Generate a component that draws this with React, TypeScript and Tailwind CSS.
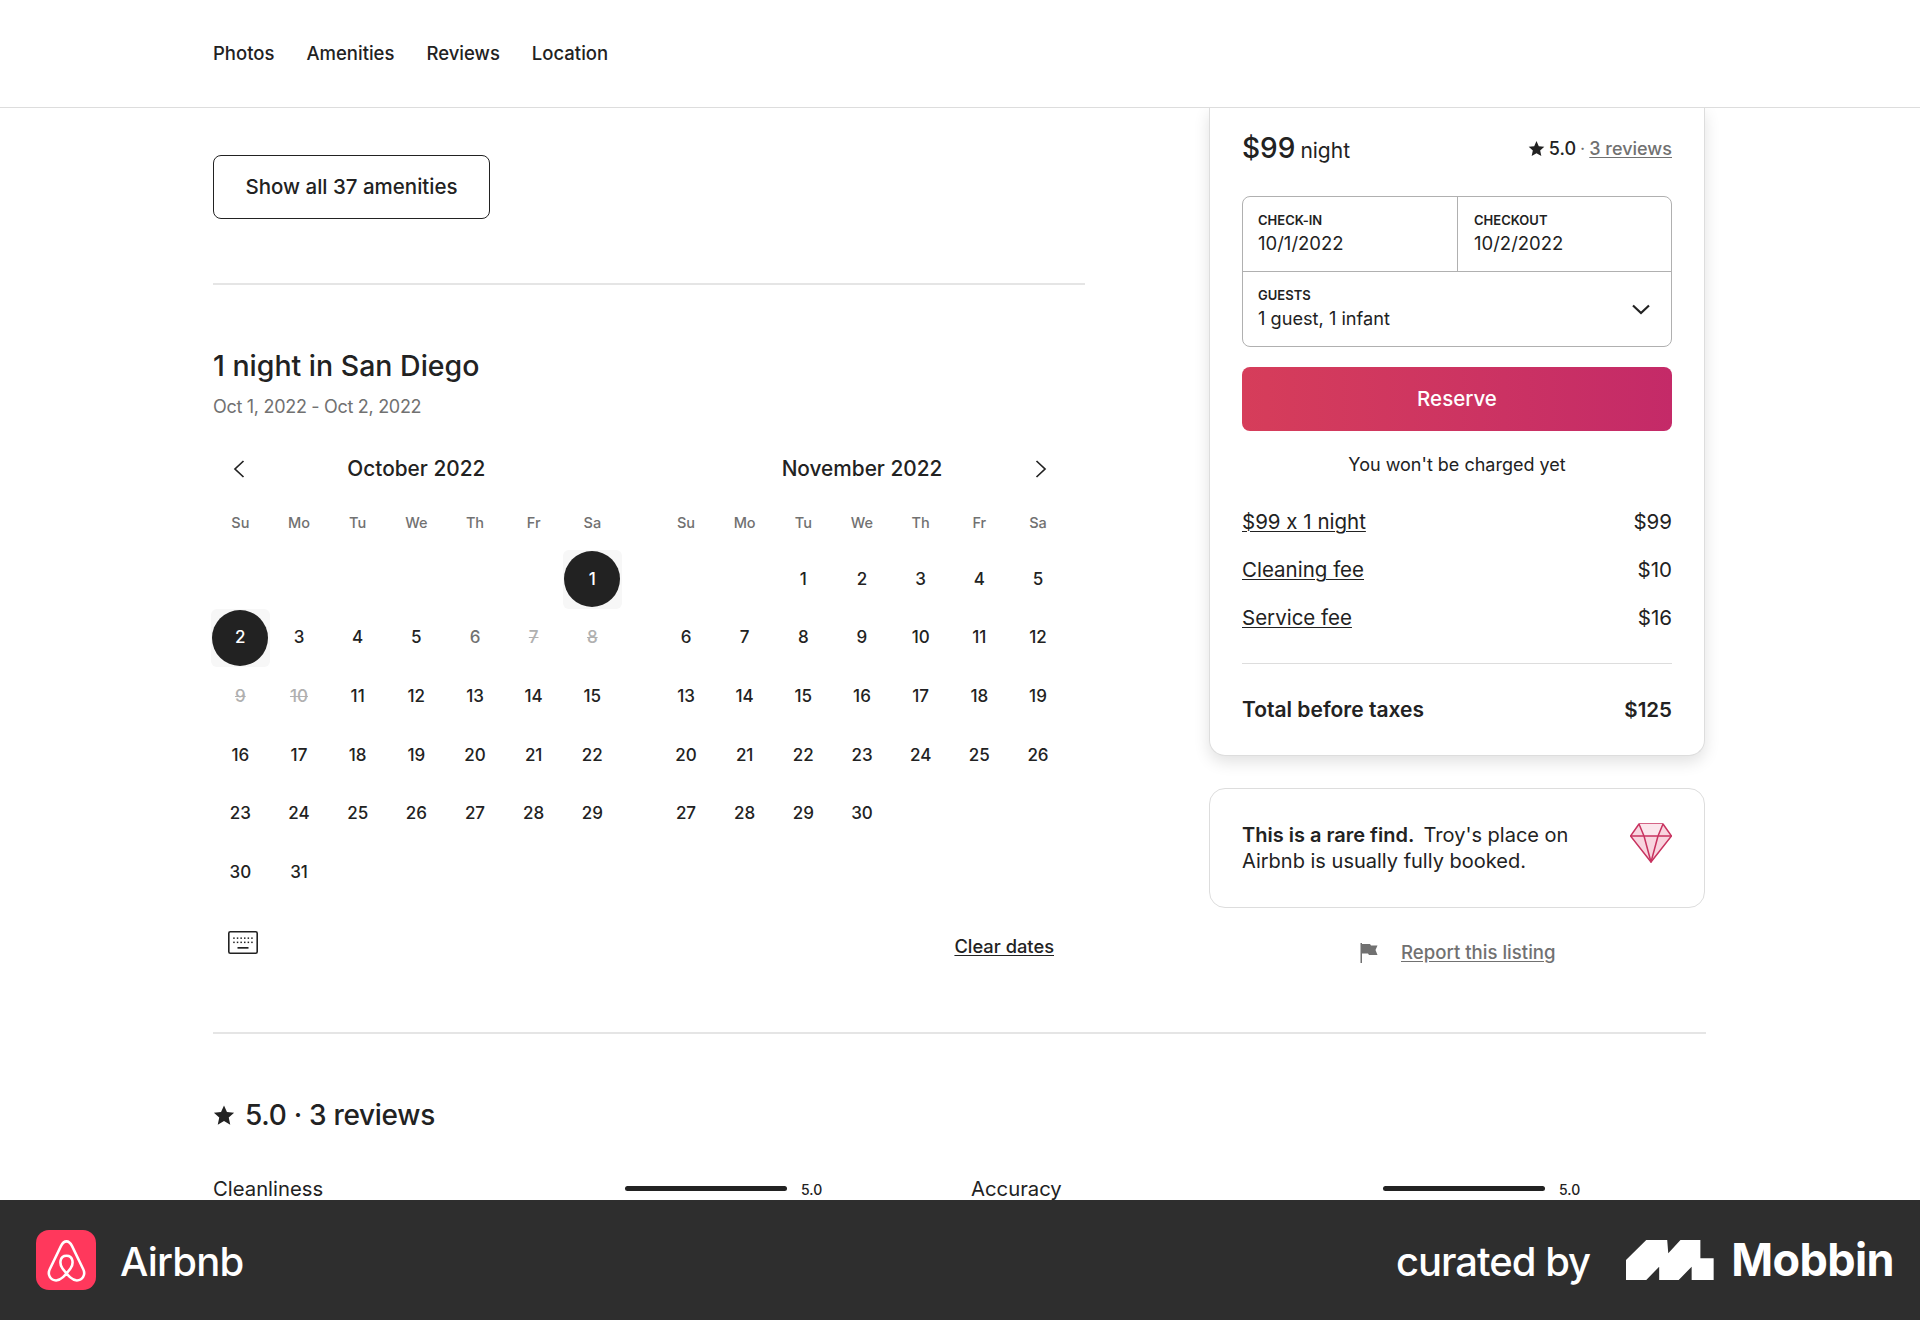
import React from 'react';

const font = { fontFamily: 'Inter, "Noto Sans", sans-serif', fontFeatureSettings: '"calt" 0' };

type Day = { d: number; state?: 'sel' | 'past' | 'off' };

const octDays: (Day | null)[] = [
  null, null, null, null, null, null, { d: 1, state: 'sel' },
  { d: 2, state: 'sel' }, { d: 3 }, { d: 4 }, { d: 5 }, { d: 6, state: 'past' }, { d: 7, state: 'off' }, { d: 8, state: 'off' },
  { d: 9, state: 'off' }, { d: 10, state: 'off' },
  ...Array.from({ length: 21 }, (_, i) => ({ d: i + 11 })),
];
const novDays: (Day | null)[] = [
  null, null,
  ...Array.from({ length: 30 }, (_, i) => ({ d: i + 1 })),
];
const weekdays = ['Su', 'Mo', 'Tu', 'We', 'Th', 'Fr', 'Sa'];

function Star({ className }: { className: string }) {
  return (
    <svg viewBox="0 0 32 32" className={className} fill="currentColor">
      <path d="M16 2l4.3 9.6 10.4 1.1-7.8 7 2.2 10.3L16 24.8 6.9 30l2.2-10.3-7.8-7 10.4-1.1z" />
    </svg>
  );
}

function Month({ title, days, nav }: { title: string; days: (Day | null)[]; nav: 'left' | 'right' }) {
  return (
    <div className="w-[410.67px]">
      <div className="relative flex h-10 items-center justify-center text-[20.8px] font-medium text-[#222222]">
        {nav === 'left' && (
          <svg viewBox="0 0 12 18" className="absolute left-[22px] top-[11px] h-[18px] w-3" fill="none" stroke="#222222" strokeWidth="1.7">
            <path d="M10.5 1L2 9L10.5 17" />
          </svg>
        )}
        {title}
        {nav === 'right' && (
          <svg viewBox="0 0 12 18" className="absolute right-[20px] top-[11px] h-[18px] w-3" fill="none" stroke="#222222" strokeWidth="1.7">
            <path d="M1.5 1L10 9L1.5 17" />
          </svg>
        )}
      </div>
      <div className="mt-[22px] grid h-6 grid-cols-7 items-center text-center text-[14.5px] font-medium text-[#717171]">
        {weekdays.map(w => <div key={w}>{w}</div>)}
      </div>
      <div className="mt-[15px] grid grid-cols-7 auto-rows-[58.67px] text-[17px] font-medium text-[#222222]">
        {days.map((day, i) => {
          if (!day) return <div key={i} />;
          if (day.state === 'sel') {
            return (
              <div key={i} className="flex items-center justify-center rounded-md bg-[#f7f7f7]">
                <div className="flex h-14 w-14 items-center justify-center rounded-full bg-[#222222] text-white">{day.d}</div>
              </div>
            );
          }
          return (
            <div
              key={i}
              className={
                'flex items-center justify-center ' +
                (day.state === 'past' ? 'text-[#717171]' : day.state === 'off' ? 'text-[#b0b0b0] line-through' : '')
              }
            >
              {day.d}
            </div>
          );
        })}
      </div>
    </div>
  );
}

function KeyboardIcon() {
  const dots = [];
  for (let r = 0; r < 2; r++) {
    for (let c = 0; c < 6; c++) {
      dots.push(<rect key={r + '-' + c} x={5.2 + c * 3.6} y={6.4 + r * 4.2} width="1.5" height="1.5" fill="#222222" />);
    }
  }
  return (
    <svg viewBox="0 0 30 23" className="h-[23px] w-[30px]" fill="none">
      <rect x="0.8" y="0.8" width="28.4" height="21.4" rx="1.5" stroke="#222222" strokeWidth="1.6" />
      {dots}
      <rect x="9.5" y="16" width="11" height="1.7" fill="#222222" />
    </svg>
  );
}

function AirbnbMark() {
  return (
    <div className="flex h-[60px] w-[60px] items-center justify-center rounded-[13px] bg-[#ff385c]">
      <svg viewBox="0 0 32 32" className="h-[51px] w-[51px]" fill="none" stroke="white" strokeWidth="1.6" strokeLinejoin="round">
        <path d="M16 4C14.5 4 13.5 5 12.5 7L5.5 21.5C3.8 25 6 28.5 9.5 28.5C12.5 28.5 15 25.5 18.5 21C20.5 18.5 20.5 13 16 13C11.5 13 11.5 18.5 13.5 21C17 25.5 19.5 28.5 22.5 28.5C26 28.5 28.2 25 26.5 21.5L19.5 7C18.5 5 17.5 4 16 4Z" />
      </svg>
    </div>
  );
}

function MobbinMark() {
  return (
    <svg viewBox="717 90 252 120" className="h-[40px] w-[88px]" preserveAspectRatio="none" fill="white">
      <polygon points="717,150 775,90 835,90 838,130 873,90 930,90 930,145 968,145 968,210 905,210 905,170 868,210 812,210 812,170 775,210 717,210" />
    </svg>
  );
}

function Gem() {
  return (
    <svg viewBox="0 0 42 40" className="h-10 w-[42px]" fill="none" stroke="#c8325f" strokeWidth="1.5" strokeLinejoin="round">
      <path d="M9 1H33L41.5 13L21 39L0.5 13Z" fill="#f8d5df" />
      <path d="M9 1H33L28 13H14Z" fill="#fbe6ec" stroke="none" />
      <path d="M0.5 13H41.5M9 1L14 13L21 39L28 13L33 1" />
    </svg>
  );
}

function FeeRow({ label, value }: { label: string; value: string }) {
  return (
    <div className="flex h-6 items-center justify-between text-[20.5px] text-[#222222]">
      <span className="underline decoration-1 underline-offset-2">{label}</span>
      <span>{value}</span>
    </div>
  );
}

function RatingRow({ label }: { label: string }) {
  return (
    <div className="flex h-6 w-[758px] items-center text-[20.3px] text-[#222222]">
      <span className="w-[412px]">{label}</span>
      <div className="-mt-px h-[5px] w-[162px] rounded-full bg-[#222222]" />
      <span className="ml-[14px] text-[14px] font-medium">5.0</span>
    </div>
  );
}

export default function App() {
  return (
    <div className="flex h-[1320px] w-[1920px] flex-col overflow-hidden bg-white" style={font}>
      <div className="relative h-[1200px] overflow-hidden">
        <header className="relative z-10 flex h-[108px] items-center gap-[32px] border-b border-[#dddddd] bg-white pl-[213px] text-[18.5px] font-medium text-[#222222]">
          <span>Photos</span>
          <span>Amenities</span>
          <span>Reviews</span>
          <span>Location</span>
        </header>

        <div className="pl-[213px]">
          <div className="flex">
            <div className="w-[872px]">
              <button className="mt-[47px] h-16 w-[277px] rounded-lg border border-[#222222] text-[20.5px] font-medium text-[#222222]">
                Show all 37 amenities
              </button>
              <div className="mt-[64px] h-0.5 bg-[#e5e5e5]" />
              <h2 className="mt-[64px] h-[34px] text-[28.5px] leading-[34px] font-medium text-[#222222]">1 night in San Diego</h2>
              <p className="mt-3 text-[18px] leading-6 tracking-[-0.3px] text-[#717171]">Oct 1, 2022 - Oct 2, 2022</p>
              <div className="mt-[30px] -ml-[2px] flex gap-[35px]">
                <Month title="October 2022" days={octDays} nav="left" />
                <Month title="November 2022" days={novDays} nav="right" />
              </div>
              <div className="mt-[32px] flex h-6 w-[841px] items-center justify-between">
                <div className="-mt-[6px] ml-[15px]"><KeyboardIcon /></div>
                <span className="mt-0.5 text-[18.3px] font-medium text-[#222222] underline underline-offset-2">Clear dates</span>
              </div>
            </div>

            <aside className="ml-[124px] w-[496px]">
              <div className="rounded-b-2xl border border-t-0 border-[#dddddd] bg-white px-8 pb-[33px] shadow-[0_6px_16px_rgba(0,0,0,0.12)]">
                <div className="mb-2 flex h-[80px] items-center justify-between text-[#222222]">
                  <div className="flex items-baseline gap-[5px]">
                    <span className="text-[28px] font-medium">$99</span>
                    <span className="text-[21px]">night</span>
                  </div>
                  <div className="flex items-center pt-px text-[18px]">
                    <Star className="h-[17px] w-[17px]" />
                    <span className="ml-1 font-medium">5.0</span>
                    <span className="mx-1 text-[#717171]">·</span>
                    <span className="font-medium text-[#717171] underline underline-offset-2">3 reviews</span>
                  </div>
                </div>

                <div className="rounded-lg border border-[#b0b0b0] text-[#222222]">
                  <div className="flex h-[75px] border-b border-[#b0b0b0]">
                    <div className="w-[215px] border-r border-[#b0b0b0] pl-[15px] pt-[13px]">
                      <div className="text-[13px] leading-[20px] font-semibold">CHECK-IN</div>
                      <div className="mt-px text-[18.5px] leading-[24px]">10/1/2022</div>
                    </div>
                    <div className="pl-4 pt-[13px]">
                      <div className="text-[13px] leading-[20px] font-semibold">CHECKOUT</div>
                      <div className="mt-px text-[18.5px] leading-[24px]">10/2/2022</div>
                    </div>
                  </div>
                  <div className="flex h-[74px] items-center justify-between pl-[15px] pr-[21px]">
                    <div className="-mt-[3px]">
                      <div className="text-[13px] leading-[20px] font-semibold">GUESTS</div>
                      <div className="mt-px text-[18.2px] leading-[24px]">1 guest, 1 infant</div>
                    </div>
                    <svg viewBox="0 0 18 11" className="h-[11px] w-[18px]" fill="none" stroke="#222222" strokeWidth="2.2">
                      <path d="M1 1.5L9 9L17 1.5" />
                    </svg>
                  </div>
                </div>

                <button className="mt-[20px] h-16 w-full rounded-lg bg-gradient-to-r from-[#d63d5a] to-[#c42a68] text-[20.5px] font-medium text-white">
                  Reserve
                </button>
                <div className="mt-[22px] text-center text-[18px] leading-6 text-[#222222]">You won't be charged yet</div>

                <div className="mt-[33px] flex flex-col gap-[24px]">
                  <FeeRow label="$99 x 1 night" value="$99" />
                  <FeeRow label="Cleaning fee" value="$10" />
                  <FeeRow label="Service fee" value="$16" />
                </div>
                <div className="mt-[33px] h-px bg-[#dddddd]" />
                <div className="mt-[34px] flex h-6 items-center justify-between text-[20.5px] font-semibold text-[#222222]">
                  <span className="text-[21px]">Total before taxes</span>
                  <span>$125</span>
                </div>
              </div>

              <div className="mt-[32px] flex h-[120px] items-center justify-between rounded-2xl border border-[#dddddd] pl-8 pr-8">
                <p className="w-[350px] text-[20px] leading-[26px] text-[#222222]">
                  <span className="font-semibold">This is a rare find.</span>{' '}&thinsp;Troy's place on Airbnb is usually fully booked.
                </p>
                <div className="-mt-[10px]"><Gem /></div>
              </div>

              <div className="mt-[33px] flex h-6 items-center pl-[151px] text-[#717171]">
                <svg viewBox="0 0 18 20" className="h-5 w-[18px]" fill="currentColor">
                  <path d="M0.5 0H2V20H0.5Z" />
                  <path d="M2 1H10L11 2.5H17.5L15.5 7L17.5 12H9L8 10.5H2Z" />
                </svg>
                <span className="ml-[23px] text-[18.6px] font-medium underline underline-offset-2">Report this listing</span>
              </div>
            </aside>
          </div>

          <div className="mt-[67px] h-0.5 w-[1493px] bg-[#e5e5e5]" />
          <div className="mt-[63px] flex h-9 items-center text-[#222222]">
            <Star className="h-[22px] w-[22px]" />
            <span className="ml-[10px] text-[28px] font-medium tracking-[-0.3px]">5.0 · 3 reviews</span>
          </div>
          <div className="mt-[44px] flex">
            <RatingRow label="Cleanliness" />
            <RatingRow label="Accuracy" />
          </div>
        </div>
      </div>

      <footer className="flex h-[120px] items-center justify-between bg-[#2e2e2e] pl-9 pr-[26px] text-white">
        <div className="flex items-center">
          <AirbnbMark />
          <span className="ml-6 pt-1 text-[40px] font-medium tracking-[-0.8px]">Airbnb</span>
        </div>
        <div className="flex items-center">
          <span className="pt-1 text-[40px] font-medium tracking-[-1px]">curated by</span>
          <div className="ml-[36px]"><MobbinMark /></div>
          <span className="ml-[17px] text-[45px] font-bold tracking-[-0.6px]">Mobbin</span>
        </div>
      </footer>
    </div>
  );
}
